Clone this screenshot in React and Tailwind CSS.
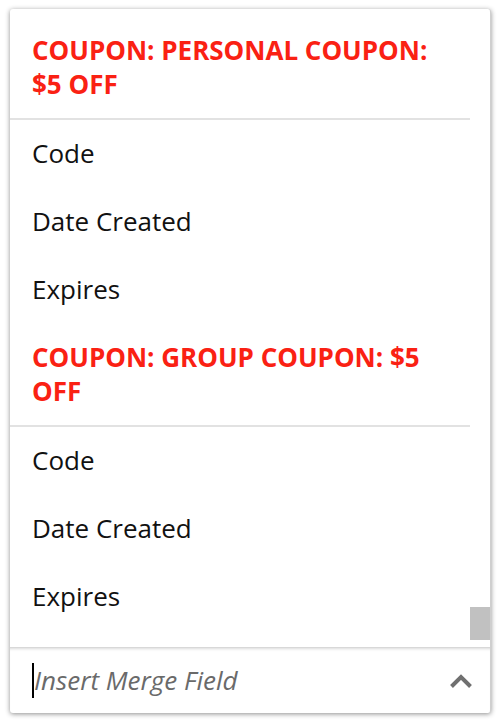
import React from "react";

const groups = [
  { title: "COUPON: PERSONAL COUPON: $5 OFF", fields: ["Code", "Date Created", "Expires"] },
  { title: "COUPON: GROUP COUPON: $5 OFF", fields: ["Code", "Date Created", "Expires"] },
];

export default function App() {
  return (
    <div className="w-[504px] h-[724px] bg-white p-[9px_13px_11px_10px] font-['Open_Sans',sans-serif]">
      <div className="h-full flex flex-col bg-white rounded-[3px] shadow-[0_1px_5px_rgba(0,0,0,0.45)] border-r border-[#cfcfcf] overflow-hidden">
        {/* scrollable list */}
        <div className="flex h-[638px]">
          <div className="flex-1 overflow-hidden pt-2">
            {groups.map((g, i) => (
              <div key={i}>
                <div className="pl-[22px] pr-10 pt-4 pb-[17px] border-b-2 border-[#e2e2e2] text-[26px] leading-[34px] font-bold text-[#fa2113]">
                  {g.title}
                </div>
                {g.fields.map((f) => (
                  <div key={f} className="pl-[22px] h-[68px] flex items-center pb-[2px] text-[26px] text-[#111]">
                    {f}
                  </div>
                ))}
              </div>
            ))}
          </div>
          <div className="w-[20px] pt-[598px]">
            <div className="h-[33px] bg-[#c1c1c1]" />
          </div>
        </div>
        {/* input */}
        <div className="flex-1 flex items-center pl-[22px] pr-[17px] border-t border-[#d8d8d8] shadow-[inset_0_3px_3px_-2px_rgba(0,0,0,0.15)]">
          <div className="w-[2px] h-[35px] bg-black" />
          <span className="flex-1 text-[26px] italic text-[#6a6a6a] leading-none pb-[2px]">Insert Merge Field</span>
          <svg width="24" height="16" viewBox="0 0 24 16" className="text-[#707070]">
            <path d="M2.5 13.5 L12 4 L21.5 13.5" fill="none" stroke="currentColor" strokeWidth="4" />
          </svg>
        </div>
      </div>
    </div>
  );
}
